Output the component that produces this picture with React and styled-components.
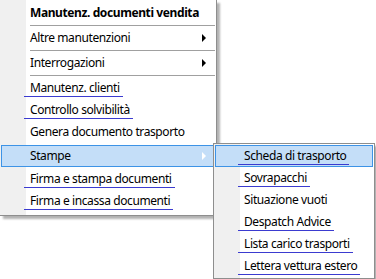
import styled, { createGlobalStyle } from "styled-components";

const GlobalStyle = createGlobalStyle`
  html, body {
    margin: 0;
    padding: 0;
    background: #fff;
  }
  body {
    font-family: "Noto Sans", "Open Sans", sans-serif;
    font-size: 12px;
    color: #000;
  }
`;

const mainItems = [
  { label: "Manutenz. documenti vendita", bold: true },
  { sep: true },
  { label: "Altre manutenzioni", arrow: true },
  { sep: true },
  { label: "Interrogazioni", arrow: true },
  { sep: true },
  { label: "Manutenz. clienti", marked: true },
  { label: "Controllo solvibilità", marked: true },
  { label: "Genera documento trasporto" },
  { label: "Stampe", arrow: true, active: true },
  { label: "Firma e stampa documenti", marked: true },
  { label: "Firma e incassa documenti", marked: true },
];

const subItems = [
  { label: "Scheda di trasporto", marked: true, active: true },
  { label: "Sovrapacchi", marked: true },
  { label: "Situazione vuoti" },
  { label: "Despatch Advice", marked: true },
  { label: "Lista carico trasporti", marked: true },
  { label: "Lettera vettura estero", marked: true },
];

const App = () => {
  return (
    <>
      <GlobalStyle />
      <Stage>
        <MainMenu>
          {mainItems.map((item, i) =>
            item.sep ? (
              <Separator key={i} />
            ) : (
              <MainItem key={i} $active={item.active}>
                <Label $bold={item.bold} $marked={item.marked}>
                  {item.label}
                </Label>
                {item.arrow && <Arrow $active={item.active} />}
              </MainItem>
            )
          )}
        </MainMenu>
        <SubMenu>
          {subItems.map((item, i) => (
            <SubItem key={i} $active={item.active}>
              <Label $marked={item.marked}>{item.label}</Label>
            </SubItem>
          ))}
        </SubMenu>
      </Stage>
    </>
  );
};

const Stage = styled.div`
  position: relative;
  width: 376px;
  height: 279px;
  overflow: hidden;
`;

const Menu = styled.div`
  display: flex;
  flex-direction: column;
  box-sizing: border-box;
  border: 1px solid #8e8e8e;
  box-shadow: 3px 3px 2px rgba(0, 0, 0, 0.3);
  background: linear-gradient(to right, #f0f0f0 26px, #fff 26px);
`;

const MainMenu = styled(Menu)`
  width: 217px;
  border-top: none;
  border-left: none;
  padding: 2px 0 3px;
`;

const SubMenu = styled(Menu)`
  position: absolute;
  left: 213px;
  top: 143px;
  width: 162px;
  padding: 1px;
`;

const Item = styled.div`
  display: flex;
  align-items: center;
  box-sizing: border-box;
  height: 22px;
  padding: 0 7px 0 28px;
  border: 1px solid ${(p) => (p.$active ? "#3d93e6" : "transparent")};
  background: ${(p) => (p.$active ? "#c4def8" : "transparent")};
`;

const MainItem = styled(Item)`
  margin: ${(p) => (p.$active ? "2px 2px 1px 1px" : "0 2px 0 1px")};
`;

const SubItem = styled(Item)`
  margin: 0;
`;

const Label = styled.span`
  position: relative;
  line-height: 20px;
  height: 20px;
  white-space: nowrap;
  font-weight: ${(p) => (p.$bold ? 700 : 400)};
  letter-spacing: -0.4px;
  &::after {
    content: "";
    display: ${(p) => (p.$marked ? "block" : "none")};
    position: absolute;
    left: -6px;
    right: -3px;
    bottom: 1px;
    height: 1px;
    background: #3b3bd0;
  }
`;

const Arrow = styled.span`
  margin-left: auto;
  width: 0;
  height: 0;
  border-top: 4px solid transparent;
  border-bottom: 4px solid transparent;
  border-left: 4px solid ${(p) => (p.$active ? "#fff" : "#000")};
`;

const Separator = styled.div`
  height: 1px;
  margin: 1px 1px 1px 30px;
  background: #a0a0a0;
`;

export default App;
